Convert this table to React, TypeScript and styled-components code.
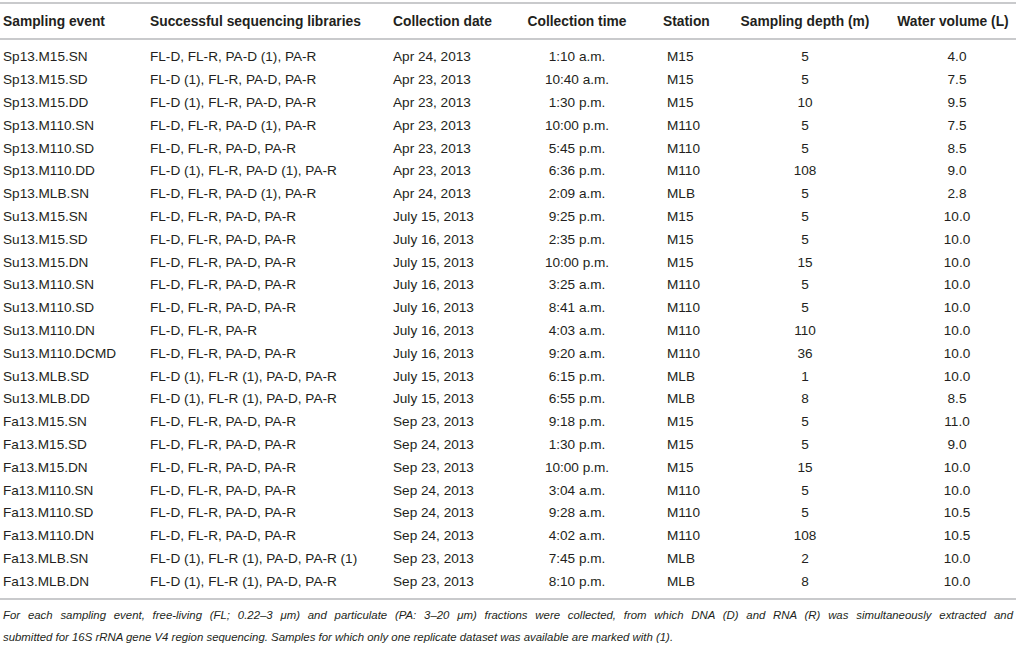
import React from "react";
import styled, { createGlobalStyle } from "styled-components";

const GlobalStyle = createGlobalStyle`
  html, body {
    margin: 0;
    padding: 0;
    background: #ffffff;
  }
  body {
    font-family: "Liberation Sans", Arial, Helvetica, sans-serif;
    color: #231f20;
  }
`;

type Align = "left" | "center";

interface ColSpec {
  align: Align;
  headPad: number;
  bodyPad: number;
}

const COLS: ColSpec[] = [
  { align: "left", headPad: 0, bodyPad: 0 },
  { align: "left", headPad: 0, bodyPad: 0 },
  { align: "left", headPad: 0, bodyPad: 0 },
  { align: "center", headPad: 0, bodyPad: 0 },
  { align: "left", headPad: 16, bodyPad: 20 },
  { align: "center", headPad: 0, bodyPad: 0 },
  { align: "center", headPad: 20, bodyPad: 28 },
];

const GRID = "147px 243px 114px 140px 93px 130px 1fr";

const Page = styled.div`
  width: 1016px;
  padding-top: 2px;
`;

const TableHead = styled.div`
  display: grid;
  grid-template-columns: ${GRID};
  align-items: center;
  height: 34px;
  padding-left: 3px;
  border-top: 2px solid #c9cacc;
  border-bottom: 2px solid #c9cacc;
`;

const TableBody = styled.div`
  padding: 5.6px 0 5.2px 3px;
  border-bottom: 2px solid #c9cacc;
`;

const Row = styled.div`
  display: grid;
  grid-template-columns: ${GRID};
  align-items: center;
  height: 22.8px;
`;

const HeadCell = styled.div<{ $align: Align; $pad: number }>`
  font-size: 13.8px;
  font-weight: 700;
  white-space: nowrap;
  text-align: ${(p) => p.$align};
  padding-left: ${(p) => p.$pad}px;
  color: #231f20;
`;

const Cell = styled.div<{ $align: Align; $pad: number }>`
  font-size: 13.6px;
  white-space: nowrap;
  text-align: ${(p) => p.$align};
  padding-left: ${(p) => p.$pad}px;
  color: #231f20;
`;

const Footnote = styled.div`
  padding: 4px 3px 0 3px;
  font-size: 11.4px;
  line-height: 22px;
  font-style: italic;
  color: #231f20;
`;

const FootLine = styled.span<{ $justify?: boolean }>`
  display: block;
  white-space: nowrap;
  text-align: ${(p) => (p.$justify ? "justify" : "left")};
  text-align-last: ${(p) => (p.$justify ? "justify" : "left")};
  ${(p) => (p.$justify ? "white-space: normal;" : "")}
`;

const headers = [
  "Sampling event",
  "Successful sequencing libraries",
  "Collection date",
  "Collection time",
  "Station",
  "Sampling depth (m)",
  "Water volume (L)",
];

const rows: string[][] = [
  ["Sp13.M15.SN", "FL-D, FL-R, PA-D (1), PA-R", "Apr 24, 2013", "1:10 a.m.", "M15", "5", "4.0"],
  ["Sp13.M15.SD", "FL-D (1), FL-R, PA-D, PA-R", "Apr 23, 2013", "10:40 a.m.", "M15", "5", "7.5"],
  ["Sp13.M15.DD", "FL-D (1), FL-R, PA-D, PA-R", "Apr 23, 2013", "1:30 p.m.", "M15", "10", "9.5"],
  ["Sp13.M110.SN", "FL-D, FL-R, PA-D (1), PA-R", "Apr 23, 2013", "10:00 p.m.", "M110", "5", "7.5"],
  ["Sp13.M110.SD", "FL-D, FL-R, PA-D, PA-R", "Apr 23, 2013", "5:45 p.m.", "M110", "5", "8.5"],
  ["Sp13.M110.DD", "FL-D (1), FL-R, PA-D (1), PA-R", "Apr 23, 2013", "6:36 p.m.", "M110", "108", "9.0"],
  ["Sp13.MLB.SN", "FL-D, FL-R, PA-D (1), PA-R", "Apr 24, 2013", "2:09 a.m.", "MLB", "5", "2.8"],
  ["Su13.M15.SN", "FL-D, FL-R, PA-D, PA-R", "July 15, 2013", "9:25 p.m.", "M15", "5", "10.0"],
  ["Su13.M15.SD", "FL-D, FL-R, PA-D, PA-R", "July 16, 2013", "2:35 p.m.", "M15", "5", "10.0"],
  ["Su13.M15.DN", "FL-D, FL-R, PA-D, PA-R", "July 15, 2013", "10:00 p.m.", "M15", "15", "10.0"],
  ["Su13.M110.SN", "FL-D, FL-R, PA-D, PA-R", "July 16, 2013", "3:25 a.m.", "M110", "5", "10.0"],
  ["Su13.M110.SD", "FL-D, FL-R, PA-D, PA-R", "July 16, 2013", "8:41 a.m.", "M110", "5", "10.0"],
  ["Su13.M110.DN", "FL-D, FL-R, PA-R", "July 16, 2013", "4:03 a.m.", "M110", "110", "10.0"],
  ["Su13.M110.DCMD", "FL-D, FL-R, PA-D, PA-R", "July 16, 2013", "9:20 a.m.", "M110", "36", "10.0"],
  ["Su13.MLB.SD", "FL-D (1), FL-R (1), PA-D, PA-R", "July 15, 2013", "6:15 p.m.", "MLB", "1", "10.0"],
  ["Su13.MLB.DD", "FL-D (1), FL-R (1), PA-D, PA-R", "July 15, 2013", "6:55 p.m.", "MLB", "8", "8.5"],
  ["Fa13.M15.SN", "FL-D, FL-R, PA-D, PA-R", "Sep 23, 2013", "9:18 p.m.", "M15", "5", "11.0"],
  ["Fa13.M15.SD", "FL-D, FL-R, PA-D, PA-R", "Sep 24, 2013", "1:30 p.m.", "M15", "5", "9.0"],
  ["Fa13.M15.DN", "FL-D, FL-R, PA-D, PA-R", "Sep 23, 2013", "10:00 p.m.", "M15", "15", "10.0"],
  ["Fa13.M110.SN", "FL-D, FL-R, PA-D, PA-R", "Sep 24, 2013", "3:04 a.m.", "M110", "5", "10.0"],
  ["Fa13.M110.SD", "FL-D, FL-R, PA-D, PA-R", "Sep 24, 2013", "9:28 a.m.", "M110", "5", "10.5"],
  ["Fa13.M110.DN", "FL-D, FL-R, PA-D, PA-R", "Sep 24, 2013", "4:02 a.m.", "M110", "108", "10.5"],
  ["Fa13.MLB.SN", "FL-D (1), FL-R (1), PA-D, PA-R (1)", "Sep 23, 2013", "7:45 p.m.", "MLB", "2", "10.0"],
  ["Fa13.MLB.DN", "FL-D (1), FL-R (1), PA-D, PA-R", "Sep 23, 2013", "8:10 p.m.", "MLB", "8", "10.0"],
];

export default function App() {
  return (
    <>
      <GlobalStyle />
      <Page>
        <TableHead>
          {headers.map((h, i) => (
            <HeadCell key={h} $align={COLS[i].align} $pad={COLS[i].headPad}>
              {h}
            </HeadCell>
          ))}
        </TableHead>
        <TableBody>
          {rows.map((r) => (
            <Row key={r[0]}>
              {r.map((c, i) => (
                <Cell key={i} $align={COLS[i].align} $pad={COLS[i].bodyPad}>
                  {c}
                </Cell>
              ))}
            </Row>
          ))}
        </TableBody>
        <Footnote>
          <FootLine $justify>
            For each sampling event, free-living (FL; 0.22–3 μm) and particulate (PA: 3–20 μm) fractions
            were collected, from which DNA (D) and RNA (R) was simultaneously extracted and
          </FootLine>
          <FootLine>
            submitted for 16S rRNA gene V4 region sequencing. Samples for which only one replicate
            dataset was available are marked with (1).
          </FootLine>
        </Footnote>
      </Page>
    </>
  );
}
